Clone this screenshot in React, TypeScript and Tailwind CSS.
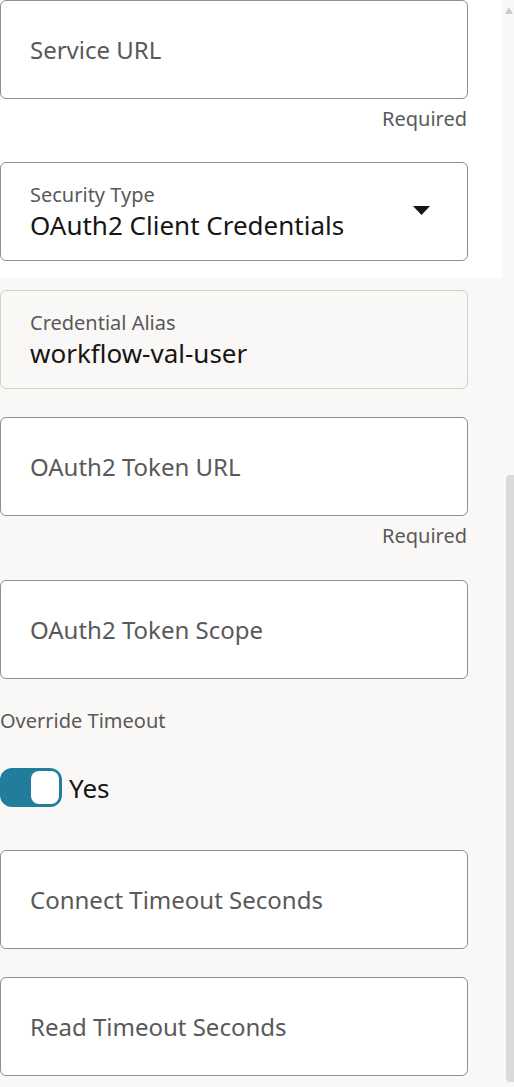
import React from 'react'

const font = { fontFamily: '"Noto Sans", "Open Sans", sans-serif' }

const Required = () => (
	<div className="mt-[8px] h-[24px] pr-[1px] text-right text-[20px] leading-[24px] text-[#595959]">
		Required
	</div>
)

const EmptyField = ({ label }: { label: string }) => (
	<div className="flex h-[99px] items-center rounded-[6px] border border-[#8f8f8f] bg-white px-[29px]">
		<span className="text-[24px] leading-none text-[#595959]">{label}</span>
	</div>
)

const SecurityType = () => (
	<div className="flex h-[99px] items-center justify-between rounded-[6px] border border-[#8f8f8f] bg-white pl-[29px] pr-[37px]">
		<div className="flex flex-col">
			<span className="text-[20px] leading-[26px] text-[#595959]">Security Type</span>
			<span className="text-[26px] leading-[34px] text-[#161513]">
				OAuth2 Client Credentials
			</span>
		</div>
		<svg width="17" height="9" viewBox="0 0 17 9" className="mb-[2px]">
			<path d="M0 0 H17 L8.5 9 Z" fill="#161513" />
		</svg>
	</div>
)

const CredentialAlias = () => (
	<div className="flex h-[99px] flex-col justify-center rounded-[6px] border border-[#d2d0cc] bg-[#f9f8f6] px-[29px]">
		<span className="text-[20px] leading-[26px] text-[#595959]">Credential Alias</span>
		<span className="text-[26px] leading-[34px] text-[#161513]">workflow-val-user</span>
	</div>
)

const Toggle = () => (
	<div className="flex items-center gap-[7px]">
		<div className="flex h-[39px] w-[62px] items-center justify-end rounded-[12px] bg-[#227d9c] pr-[3px]">
			<div className="h-[33px] w-[28px] rounded-[8px] bg-white" />
		</div>
		<span className="text-[26px] leading-none text-[#161513]">Yes</span>
	</div>
)

const Scrollbar = () => (
	<div className="flex w-[12px] flex-col items-end">
		<svg width="8" height="7" viewBox="0 0 8 7" className="mt-[7px] mr-[1px]">
			<path d="M0 7 L4 0 L8 7 Z" fill="#cbcbcb" />
		</svg>
		<div className="mt-[461px] h-[607px] w-[8px] rounded-l-[4px] bg-[#dadada]" />
	</div>
)

export default function App() {
	return (
		<div className="flex min-h-[1087px] w-[514px] bg-[#f9f8f6]" style={font}>
			<div className="flex w-[502px] flex-col">
				<div className="flex flex-col bg-white pr-[34px] pb-[17px]">
					<EmptyField label="Service URL" />
					<Required />
					<div className="mt-[31px]">
						<SecurityType />
					</div>
				</div>
				<div className="flex flex-col pr-[34px]">
					<div className="mt-[12px]">
						<CredentialAlias />
					</div>
					<div className="mt-[28px]">
						<EmptyField label="OAuth2 Token URL" />
					</div>
					<Required />
					<div className="mt-[32px]">
						<EmptyField label="OAuth2 Token Scope" />
					</div>
					<div className="mt-[30px] h-[24px] text-[20px] leading-[24px] text-[#595959]">
						Override Timeout
					</div>
					<div className="mt-[35px]">
						<Toggle />
					</div>
					<div className="mt-[43px]">
						<EmptyField label="Connect Timeout Seconds" />
					</div>
					<div className="mt-[28px]">
						<EmptyField label="Read Timeout Seconds" />
					</div>
				</div>
			</div>
			<Scrollbar />
		</div>
	)
}
